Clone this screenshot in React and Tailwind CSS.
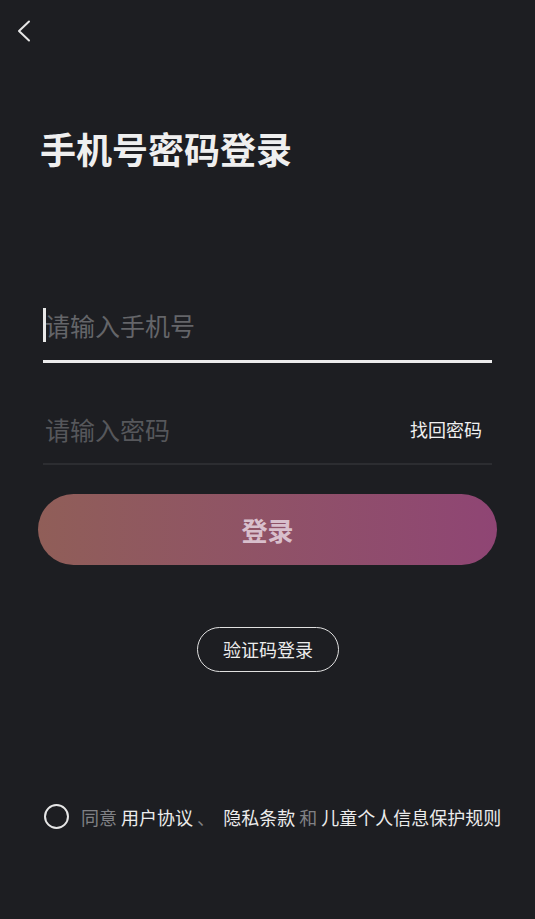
export default function App() {
  const cjk = { fontFamily: '"Noto Sans CJK SC", "Noto Sans", sans-serif' }

  return (
    <div className="w-[535px] h-[919px] bg-[#1d1e22] flex flex-col text-white overflow-hidden" style={cjk}>
      {/* back */}
      <div className="h-[62px] flex items-start pt-[20px] pl-[16px]">
        <svg width="16" height="22" viewBox="0 0 16 22" fill="none" stroke="#e6e6e6" strokeWidth="2" strokeLinecap="round" strokeLinejoin="round">
          <path d="M13 1.5 L3 11 L13 20.5" />
        </svg>
      </div>

      <h1 className="ml-[40px] mt-[60px] text-[36px] leading-[52px] font-bold text-[#efefef]">
        手机号密码登录
      </h1>

      <div className="mx-[43px] mt-[121px] flex flex-col">
        {/* phone */}
        <div className="h-[68px] pb-[6px] flex items-center border-b-[3px] border-[#ececec]">
          <div className="relative flex items-center">
            <span className="absolute left-0 top-[-1px] w-[3px] h-[34px] bg-[#e8e8e8]" />
            <span className="pl-[2px] text-[25px] leading-[32px] text-[#646569]">请输入手机号</span>
          </div>
        </div>

        {/* password */}
        <div className="h-[102px] pt-[38px] pb-[6px] flex items-center justify-between border-b-[2px] border-[#2c2d31]">
          <span className="pl-[2px] text-[25px] leading-[32px] text-[#56575b]">请输入密码</span>
          <span className="mr-[10px] text-[18px] leading-[24px] text-[#f0f0f0]">找回密码</span>
        </div>
      </div>

      <div className="mx-[38px] mt-[29px]">
        <button className="w-[459px] h-[71px] rounded-full bg-gradient-to-r from-[#905e58] to-[#8f4574] text-[26px] font-bold text-[#d8bfcc]">
          登录
        </button>
      </div>

      <div className="flex justify-center mt-[62px]">
        <button className="w-[142px] h-[45px] rounded-full border-[1.5px] border-[#e0e0e0] text-[18px] text-[#ececec] ml-[1px]">
          验证码登录
        </button>
      </div>

      <div className="flex items-center ml-[44px] mt-[132px] text-[18px] leading-[24px] whitespace-nowrap">
        <span className="w-[25px] h-[25px] rounded-full border-2 border-[#e6e6e6] mr-[12px]" />
        <span className="text-[#808185]">同意 </span>
        <span className="text-[#ececec]">&nbsp;用户协议</span>
        <span className="text-[#808185]">&nbsp;、&nbsp;</span>
        <span className="text-[#ececec]">&nbsp;隐私条款</span>
        <span className="text-[#808185]">&nbsp;和&nbsp;</span>
        <span className="text-[#ececec]">儿童个人信息保护规则</span>
      </div>
    </div>
  )
}
